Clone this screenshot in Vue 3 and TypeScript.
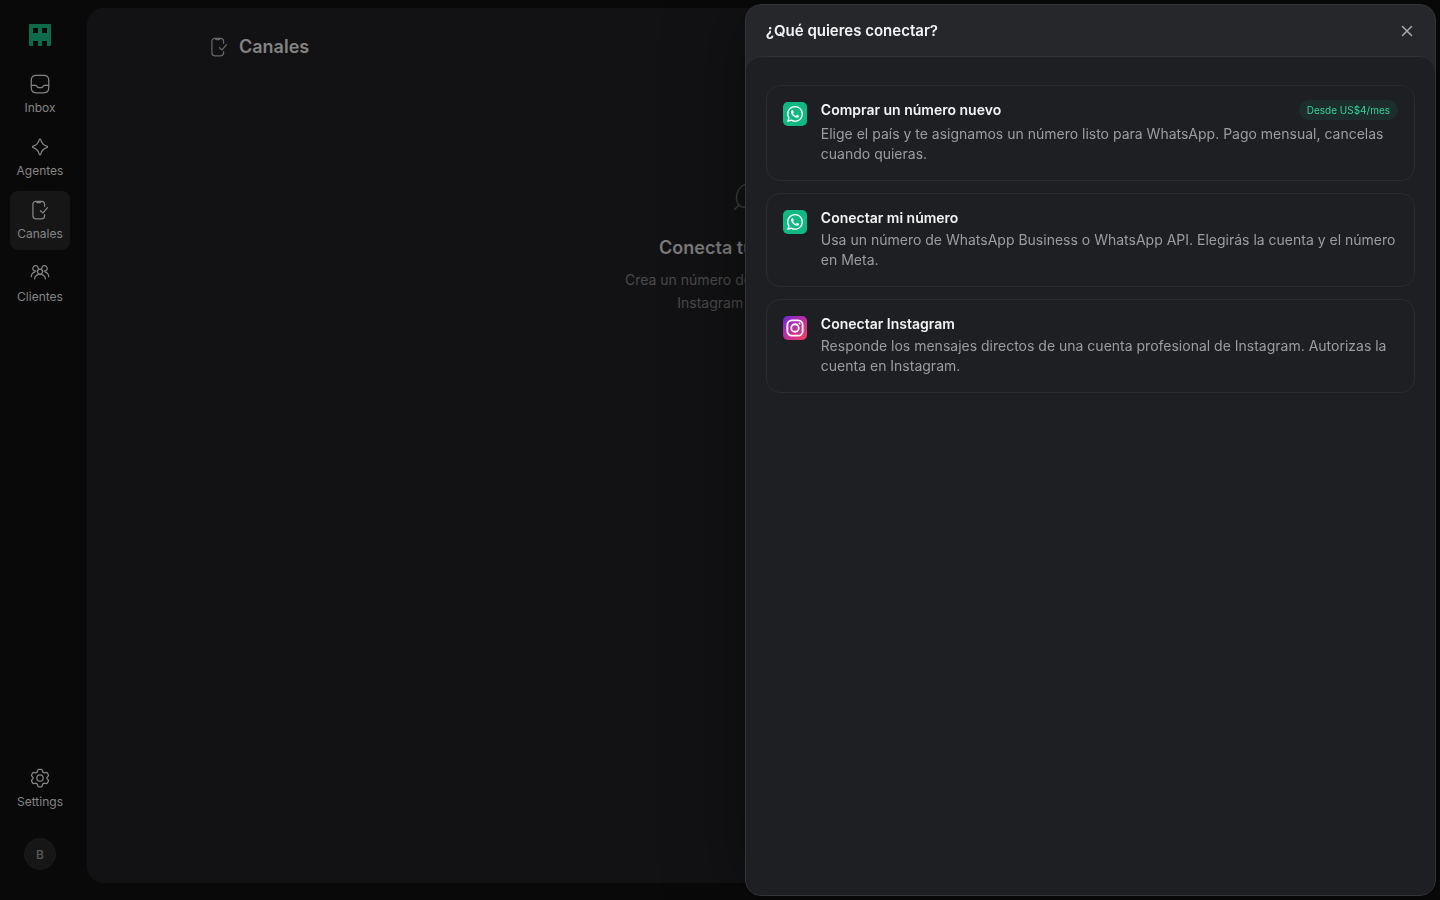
<script setup lang="ts">
interface NavItem {
  label: string
  icon: string
  active?: boolean
}
interface Channel {
  kind: 'whatsapp' | 'instagram'
  title: string
  text: string
  badge?: string
}

const phoneIcon =
  'M17.500 7.500V5a3.500 3.500 0 0 0-3.500-3.500H7A3.500 3.500 0 0 0 3.500 5v14A3.500 3.500 0 0 0 7 22.500h7a3.500 3.500 0 0 0 3.500-3.500v-1.500 M7.500 1.700q.4 1.300 1.500 1.300h3q1.100 0 1.500-1.300 M12.500 12.800l3.200 2.700 5.300-6.300'

const navItems: NavItem[] = [
  {
    label: 'Inbox',
    icon: 'M7.500 1.500h9q6 0 6 6v9q0 6-6 6h-9q-6 0-6-6v-9q0-6 6-6z M1.500 13.500h5q1.200 0 1.700.9l.6 1q.5.900 1.500.900h3.400q1 0 1.500-.900l.6-1q.5-.900 1.700-.900h5',
  },
  {
    label: 'Agentes',
    icon: 'M12 2.500q.7 0 1 1c1 4 2.900 6.200 7.200 7.500q1.600.900 0 1.800c-4.300 1.300-6.200 3.500-7.200 7.500q-1 2-2 0c-1-4-2.900-6.200-7.200-7.500q-1.600-.900 0-1.800c4.300-1.300 6.200-3.500 7.200-7.500q.3-1 1-1z',
  },
  { label: 'Canales', icon: phoneIcon, active: true },
  {
    label: 'Clientes',
    icon: 'M9 10.200a3 3 0 1 0 6 0a3 3 0 1 0-6 0 M5.500 19c.6-3.700 3-5.500 6.500-5.500s5.900 1.800 6.500 5.500 M9.800 7.500A3.300 3.300 0 1 0 7.200 9.800 M1.500 16.500c.2-3 1.600-5 4.200-5.500 M14.200 7.500a3.300 3.300 0 1 1 2.600 2.300 M22.500 16.500c-.2-3-1.600-5-4.200-5.500',
  },
]

const channels: Channel[] = [
  {
    kind: 'whatsapp',
    title: 'Comprar un número nuevo',
    text: 'Elige el país y te asignamos un número listo para WhatsApp. Pago mensual, cancelas cuando quieras.',
    badge: 'Desde US$4/mes',
  },
  {
    kind: 'whatsapp',
    title: 'Conectar mi número',
    text: 'Usa un número de WhatsApp Business o WhatsApp API. Elegirás la cuenta y el número en Meta.',
  },
  {
    kind: 'instagram',
    title: 'Conectar Instagram',
    text: 'Responde los mensajes directos de una cuenta profesional de Instagram. Autorizas la cuenta en Instagram.',
  },
]
</script>

<template>
  <div class="app">
    <aside class="sidebar">
      <svg class="logo" viewBox="0 0 22 22" aria-hidden="true">
        <path
          fill-rule="evenodd"
          d="M1 0h20q1 0 1 1v20q0 1-1 1h-3v-5h-5v5H9v-5H4v5H1q-1 0-1-1V1q0-1 1-1z M4 4h5v5H4z M13 4h5v5h-5z"
        />
      </svg>
      <nav class="nav">
        <a v-for="item in navItems" :key="item.label" href="#" class="item" :class="{ active: item.active }">
          <svg class="icon" viewBox="0 0 24 24"><path :d="item.icon" /></svg>
          <span>{{ item.label }}</span>
        </a>
      </nav>
      <a href="#" class="item settings">
        <svg class="icon" viewBox="0 0 24 24">
          <path
            d="M10.500 1.500h3q.8 0 1 .9l.6 2.200q1.200.500 2.200 1.300l2.200-.6q.8-.2 1.200.5l1.400 2.500q.4.700-.2 1.300l-1.600 1.600q.2.800 0 1.600l1.600 1.600q.6.600.2 1.300l-1.400 2.500q-.4.700-1.200.5l-2.200-.6q-1 .8-2.200 1.300l-.6 2.200q-.2.900-1 .9h-3q-.8 0-1-.9l-.6-2.200q-1.200-.5-2.200-1.300l-2.200.6q-.8.2-1.200-.5l-1.400-2.500q-.4-.7.2-1.300l1.600-1.600q-.2-.8 0-1.600l-1.600-1.600q-.6-.6-.2-1.300l1.400-2.500q.4-.7 1.200-.5l2.200.6q1-.8 2.200-1.300l.6-2.200q.2-.9 1-.9z"
          />
          <circle cx="12" cy="12" r="3.800" />
        </svg>
        <span>Settings</span>
      </a>
      <button class="avatar" type="button">B</button>
    </aside>

    <main class="main">
      <header class="page-head">
        <svg class="icon" viewBox="0 0 24 24"><path :d="phoneIcon" /></svg>
        <h1>Canales</h1>
      </header>
      <section class="empty">
        <svg class="rocket" viewBox="0 0 56 36">
          <path d="M2 30l6-6 M24 6q-8-4-14 0C3 12 3 22 8 26q4 3 10-1" />
        </svg>
        <h2>Conecta tu canal ahora</h2>
        <p>Crea un número de WhatsApp o conecta<br />Instagram para empezar.</p>
      </section>
    </main>

    <section class="drawer" role="dialog" aria-labelledby="drawer-title">
      <header class="drawer-head">
        <h2 id="drawer-title">¿Qué quieres conectar?</h2>
        <button class="close" type="button" aria-label="Cerrar">
          <svg viewBox="0 0 12 12"><path d="M1.500 1.500l9 9M10.500 1.500l-9 9" /></svg>
        </button>
      </header>
      <div class="drawer-body">
        <button v-for="c in channels" :key="c.title" type="button" class="card">
          <span class="brand" :class="c.kind">
            <svg v-if="c.kind === 'whatsapp'" viewBox="0 0 24 24">
              <path
                fill="#fff"
                d="M17.472 14.382c-.297-.149-1.758-.867-2.030-.967-.273-.099-.471-.148-.670.150-.197.297-.767.966-.940 1.164-.173.199-.347.223-.644.075-.297-.150-1.255-.463-2.390-1.475-.883-.788-1.480-1.761-1.653-2.059-.173-.297-.018-.458.130-.606.134-.133.298-.347.446-.520.149-.174.198-.298.298-.497.099-.198.050-.371-.025-.520-.075-.149-.669-1.612-.916-2.207-.242-.579-.487-.500-.669-.510-.173-.008-.371-.010-.570-.010-.198 0-.520.074-.792.372-.272.297-1.040 1.016-1.040 2.479 0 1.462 1.065 2.875 1.213 3.074.149.198 2.096 3.200 5.077 4.487.709.306 1.262.489 1.694.625.712.227 1.360.195 1.871.118.571-.085 1.758-.719 2.006-1.413.248-.694.248-1.289.173-1.413-.074-.124-.272-.198-.570-.347m-5.421 7.403h-.004a9.870 9.870 0 0 1-5.031-1.378l-.361-.214-3.741.982.998-3.648-.235-.374a9.860 9.860 0 0 1-1.510-5.260c.001-5.450 4.436-9.884 9.888-9.884 2.640 0 5.122 1.030 6.988 2.898a9.825 9.825 0 0 1 2.893 6.994c-.003 5.450-4.437 9.884-9.885 9.884m8.413-18.297A11.815 11.815 0 0 0 12.050 0C5.495 0 .160 5.335.157 11.892c0 2.096.547 4.142 1.588 5.945L.057 24l6.305-1.654a11.882 11.882 0 0 0 5.683 1.448h.005c6.554 0 11.890-5.335 11.893-11.893a11.821 11.821 0 0 0-3.480-8.413z"
              />
            </svg>
            <svg v-else viewBox="0 0 24 24" fill="none" stroke="#fff" stroke-width="2.400">
              <rect x="1.800" y="1.800" width="20.400" height="20.400" rx="6" />
              <circle cx="12" cy="12" r="5" />
              <circle cx="18" cy="6" r="1.300" fill="#fff" stroke="none" />
            </svg>
          </span>
          <span class="info">
            <span class="title-row" :class="{ tagged: c.badge }">
              <strong>{{ c.title }}</strong>
              <span v-if="c.badge" class="badge">{{ c.badge }}</span>
            </span>
            <span class="text">{{ c.text }}</span>
          </span>
        </button>
      </div>
    </section>
  </div>
</template>

<style>
body {
  margin: 0;
  background: #090909;
}
</style>

<style scoped>
* {
  box-sizing: border-box;
}
.app {
  display: flex;
  min-height: 100vh;
  background: #090909;
  font-family: Inter, 'Liberation Sans', sans-serif;
  overflow: hidden;
}
h1,
h2,
p {
  margin: 0;
}
button {
  font-family: inherit;
  cursor: pointer;
}
.sidebar {
  flex: none;
  width: 80px;
  padding: 24px 10px 30px;
  display: flex;
  flex-direction: column;
  align-items: center;
}
.logo {
  width: 22px;
  height: 22px;
  fill: #0e6a4a;
}
.nav {
  margin-top: 19px;
  display: flex;
  flex-direction: column;
  gap: 4px;
}
.item {
  width: 60px;
  height: 59px;
  border-radius: 8px;
  display: flex;
  flex-direction: column;
  align-items: center;
  padding-top: 9px;
  gap: 6px;
  color: #858585;
  font-size: 12px;
  line-height: 16px;
  text-decoration: none;
}
.item.active {
  background: #161616;
}
.icon {
  width: 20px;
  height: 20px;
  flex: none;
  fill: none;
  stroke: currentColor;
  stroke-width: 1.5;
  stroke-linecap: round;
  stroke-linejoin: round;
}
.settings {
  margin-top: auto;
}
.avatar {
  margin-top: 20px;
  width: 32px;
  height: 32px;
  flex: none;
  padding: 0;
  border: 1px solid #1b1b1b;
  border-radius: 50%;
  background: #161616;
  color: #5a5a5a;
  font-size: 12px;
  font-weight: 500;
}
.main {
  flex: 1;
  margin: 8px 8px 17px 7px;
  border-radius: 16px;
  background: #121214;
  padding: 27px 122px;
}
.page-head {
  display: flex;
  align-items: center;
  gap: 10px;
  color: #666;
}
.page-head h1 {
  color: #838383;
  font-size: 18px;
  line-height: 24px;
  font-weight: 600;
}
.empty {
  margin-top: 121px;
  display: flex;
  flex-direction: column;
  align-items: center;
  text-align: center;
}
.rocket {
  width: 56px;
  height: 36px;
  fill: none;
  stroke: #3c3c3e;
  stroke-width: 1.5;
}
.empty h2 {
  margin-top: 20px;
  color: #7c7c7c;
  font-size: 18px;
  line-height: 24px;
  font-weight: 600;
}
.empty p {
  margin-top: 8px;
  color: #4b4b4c;
  font-size: 14px;
  line-height: 23px;
}
.drawer {
  position: fixed;
  top: 4px;
  right: 4px;
  bottom: 4px;
  width: 48%;
  display: flex;
  flex-direction: column;
  border: 1px solid #333437;
  border-radius: 16px;
  background: #26272b;
  box-shadow: 0 0 80px rgba(0, 0, 0, 0.4);
  overflow: hidden;
}
.drawer-head {
  height: 51px;
  flex: none;
  padding: 0 20px;
  display: flex;
  align-items: center;
  justify-content: space-between;
}
.drawer-head h2 {
  color: #f4f4f5;
  font-size: 15px;
  line-height: 20px;
  font-weight: 600;
}
.close {
  padding: 2px;
  border: 0;
  background: none;
  display: flex;
}
.close svg {
  width: 12px;
  height: 12px;
  stroke: #a9aaad;
  stroke-width: 1.5;
  stroke-linecap: round;
}
.drawer-body {
  flex: 1;
  padding: 28px 20px;
  display: flex;
  flex-direction: column;
  gap: 12px;
  border-top: 1px solid #303135;
  border-radius: 16px 16px 0 0;
  background: #1e1f23;
}
.card {
  display: flex;
  align-items: flex-start;
  gap: 14px;
  padding: 14px 16px 16px;
  border: 1px solid #2b2c30;
  border-radius: 14px;
  background: none;
  text-align: left;
}
.brand {
  width: 24px;
  height: 24px;
  margin-top: 2px;
  flex: none;
  border-radius: 5px;
  display: flex;
  align-items: center;
  justify-content: center;
}
.brand.whatsapp {
  background: #10b981;
}
.brand.instagram {
  background: linear-gradient(135deg, #6d28d9, #c02fa0 50%, #f43f5e);
}
.brand svg {
  width: 16px;
  height: 16px;
}
.brand.instagram svg {
  width: 18px;
  height: 18px;
}
.info {
  flex: 1;
  display: flex;
  flex-direction: column;
  gap: 2px;
  font-size: 14px;
  line-height: 20px;
}
.title-row {
  display: flex;
  align-items: center;
  justify-content: space-between;
}
.title-row.tagged {
  margin-bottom: 2px;
}
.title-row strong {
  color: #f4f4f5;
  font-weight: 600;
}
.badge {
  padding: 0 8px;
  border-radius: 10px;
  background: #1d2d2b;
  color: #34d399;
  font-size: 10px;
}
.text {
  color: #9c9da1;
}
</style>
